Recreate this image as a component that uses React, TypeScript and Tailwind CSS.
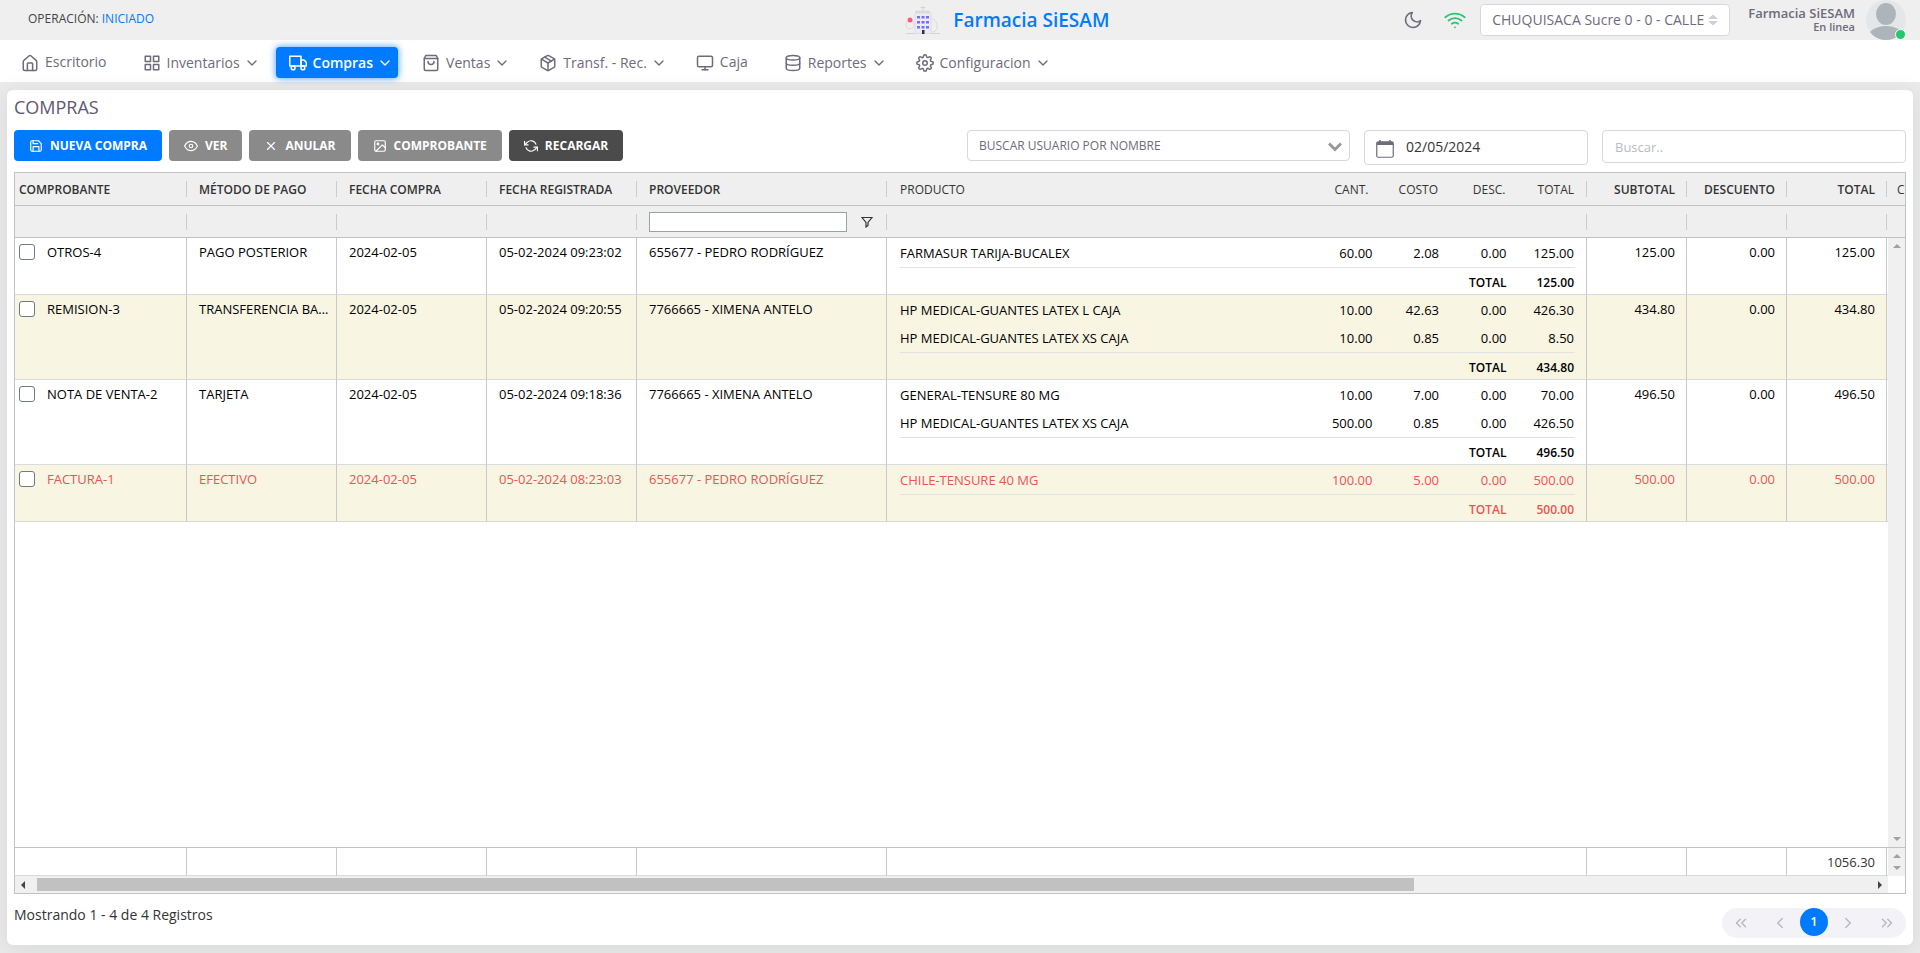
import type { ReactNode } from "react";
import {
  FiChevronDown,
  FiChevronLeft,
  FiChevronRight,
  FiChevronsLeft,
  FiChevronsRight,
  FiDatabase,
  FiEye,
  FiGrid,
  FiImage,
  FiMonitor,
  FiMoon,
  FiPackage,
  FiRefreshCcw,
  FiSave,
  FiSettings,
  FiTruck,
  FiWifi,
  FiX,
} from "react-icons/fi";

type Item = { name: string; qty: string; cost: string; disc: string; total: string };
type Purchase = {
  id: string;
  method: string;
  date: string;
  registered: string;
  supplier: string;
  items: Item[];
  total: string;
  cancelled?: boolean;
};

const purchases: Purchase[] = [
  {
    id: "OTROS-4",
    method: "PAGO POSTERIOR",
    date: "2024-02-05",
    registered: "05-02-2024 09:23:02",
    supplier: "655677 - PEDRO RODRÍGUEZ",
    items: [{ name: "FARMASUR TARIJA-BUCALEX", qty: "60.00", cost: "2.08", disc: "0.00", total: "125.00" }],
    total: "125.00",
  },
  {
    id: "REMISION-3",
    method: "TRANSFERENCIA BANCARIA",
    date: "2024-02-05",
    registered: "05-02-2024 09:20:55",
    supplier: "7766665 - XIMENA ANTELO",
    items: [
      { name: "HP MEDICAL-GUANTES LATEX L CAJA", qty: "10.00", cost: "42.63", disc: "0.00", total: "426.30" },
      { name: "HP MEDICAL-GUANTES LATEX XS CAJA", qty: "10.00", cost: "0.85", disc: "0.00", total: "8.50" },
    ],
    total: "434.80",
  },
  {
    id: "NOTA DE VENTA-2",
    method: "TARJETA",
    date: "2024-02-05",
    registered: "05-02-2024 09:18:36",
    supplier: "7766665 - XIMENA ANTELO",
    items: [
      { name: "GENERAL-TENSURE 80 MG", qty: "10.00", cost: "7.00", disc: "0.00", total: "70.00" },
      { name: "HP MEDICAL-GUANTES LATEX XS CAJA", qty: "500.00", cost: "0.85", disc: "0.00", total: "426.50" },
    ],
    total: "496.50",
  },
  {
    id: "FACTURA-1",
    method: "EFECTIVO",
    date: "2024-02-05",
    registered: "05-02-2024 08:23:03",
    supplier: "655677 - PEDRO RODRÍGUEZ",
    items: [{ name: "CHILE-TENSURE 40 MG", qty: "100.00", cost: "5.00", disc: "0.00", total: "500.00" }],
    total: "500.00",
    cancelled: true,
  },
];

function HomeIcon() {
  return (
    <svg viewBox="0 0 24 24" className="size-[18px]" fill="none" stroke="currentColor" strokeWidth="2" strokeLinecap="round" strokeLinejoin="round">
      <path d="M3 10.500c0-1 .4-1.700 1.200-2.300L10.500 2.700a2.300 2.300 0 0 1 3 0l6.300 5.500c.8.600 1.200 1.300 1.200 2.300V20a2 2 0 0 1-2 2H5a2 2 0 0 1-2-2z" />
      <path d="M8.500 22v-9a1 1 0 0 1 1-1h5a1 1 0 0 1 1 1v9" />
    </svg>
  );
}

function BagIcon() {
  return (
    <svg viewBox="0 0 24 24" className="size-[18px]" fill="none" stroke="currentColor" strokeWidth="2" strokeLinecap="round" strokeLinejoin="round">
      <path d="M5 2h14l2 4v14a2 2 0 0 1-2 2H5a2 2 0 0 1-2-2V6z" />
      <path d="M3 6h18" />
      <path d="M16 10a4 4 0 0 1-8 0" />
    </svg>
  );
}

function Logo() {
  return (
    <svg viewBox="0 0 36 30" className="h-[30px] w-9" aria-hidden="true">
      <path d="M1 28.500h34" stroke="#d4d4d8" strokeWidth="1" />
      <path d="M18 1v5M15.500 2.500h5" stroke="#d4d4d8" strokeWidth="1" />
      <path d="M11 6.500h14M10 8h16" stroke="#cfcfd4" strokeWidth="1.500" strokeDasharray="2 .7" />
      <rect x="10" y="8" width="16" height="20.500" rx="1.500" fill="#ebebf1" stroke="#dedee3" />
      <circle cx="5" cy="20" r="4" fill="none" stroke="#dcdce0" />
      <path d="M26 14c4 0 6 3 6 7s-2 6-5 6" fill="none" stroke="#dcdce0" />
      <circle cx="5" cy="15" r="2.500" fill="#ff5b75" />
      <g fill="#766eff">
        <rect x="12" y="11" width="3" height="2.500" />
        <rect x="16.500" y="11" width="3" height="2.500" />
        <rect x="21" y="11" width="3" height="2.500" />
        <rect x="12" y="16" width="3" height="2.500" />
        <rect x="16.500" y="16" width="3" height="2.500" />
        <rect x="21" y="16" width="3" height="2.500" />
        <rect x="12" y="21" width="3" height="2.500" />
        <rect x="16.500" y="21" width="3" height="2.500" />
        <rect x="21" y="21" width="3" height="2.500" />
      </g>
      <rect x="17" y="25" width="2.500" height="4" fill="#2f2e41" />
    </svg>
  );
}

function NavItem({ icon, label, menu = false, active = false }: { icon: ReactNode; label: string; menu?: boolean; active?: boolean }) {
  const look = active
    ? "bg-[#007bff] font-semibold text-white shadow-[0_0_6px_1px_rgba(0,123,255,0.6)]"
    : "font-medium text-[#6e6b7b]";
  return (
    <a href="#" className={`flex h-[31px] items-center rounded pl-[13px] text-sm ${menu ? "pr-[5px]" : "pr-3"} ${look}`}>
      {icon}
      <span className={`ml-1.5 ${menu ? "pt-px" : "pb-0.5"}`}>{label}</span>
      {menu && <FiChevronDown className="ml-1 size-4" />}
    </a>
  );
}

function ToolButton({ icon, label, color }: { icon: ReactNode; label: string; color: string }) {
  return (
    <button type="button" className={`flex h-[31px] items-center gap-[7px] rounded px-[15px] text-xs font-bold text-white ${color}`}>
      {icon}
      {label}
    </button>
  );
}

function Columns({ last }: { last: string }) {
  return (
    <colgroup>
      <col className="w-[172px]" />
      <col className="w-[150px]" />
      <col className="w-[150px]" />
      <col className="w-[150px]" />
      <col className="w-[250px]" />
      <col />
      <col className="w-[100px]" />
      <col className="w-[100px]" />
      <col className="w-[100px]" />
      <col className={last} />
    </colgroup>
  );
}

function HeadCell({ children, right = false, first = false }: { children?: ReactNode; right?: boolean; first?: boolean }) {
  return (
    <th className="border-b border-[#bdc3c7] p-0 font-semibold">
      <div className={`flex h-4 items-center border-r border-[#c9cccd] ${first ? "pl-1" : "pl-3"} ${right ? "justify-end pr-[11px]" : ""}`}>
        {typeof children === "string" ? <span className="pt-0.5">{children}</span> : children}
      </div>
    </th>
  );
}

function BodyCell({ children, right = false }: { children?: ReactNode; right?: boolean }) {
  return (
    <td
      className={`truncate border-r border-b border-r-[#c5c9cc] border-b-[#d9dcde] p-0 pt-[5px] pl-3 align-top leading-[18px] ${right ? "pr-[11px] text-right" : "pr-1"}`}
    >
      {children}
    </td>
  );
}

function ItemsTable({ purchase }: { purchase: Purchase }) {
  return (
    <table className="w-full table-fixed border-separate border-spacing-0">
      <colgroup>
        <col />
        <col className="w-[10%]" />
        <col className="w-[10%]" />
        <col className="w-[10%]" />
        <col className="w-[10%]" />
      </colgroup>
      <tbody>
        {purchase.items.map((item) => (
          <tr key={item.name} className="h-7 text-right">
            <td className="p-0 text-left">{item.name}</td>
            <td className="p-0">{item.qty}</td>
            <td className="p-0 pr-px">{item.cost}</td>
            <td className="p-0 pr-px">{item.disc}</td>
            <td className="p-0 pr-px">{item.total}</td>
          </tr>
        ))}
        <tr className="h-[27px] text-right text-xs font-semibold">
          <td colSpan={4} className="border-t border-[#e0e2e6] p-0 pt-1 pr-px">
            TOTAL
          </td>
          <td className="border-t border-[#e0e2e6] p-0 pt-1 pr-px">{purchase.total}</td>
        </tr>
      </tbody>
    </table>
  );
}

function Arrow({ dir, dark = false }: { dir: "up" | "down" | "left" | "right"; dark?: boolean }) {
  const d = {
    up: "M0 6 4 2l4 4z",
    down: "M0 2l4 4 4-4z",
    left: "M6 0 2 4l4 4z",
    right: "M2 0l4 4-4 4z",
  }[dir];
  return (
    <svg viewBox="0 0 8 8" className={`size-2 ${dark ? "text-[#444]" : "text-[#a0a0a0]"}`} aria-hidden="true">
      <path d={d} fill="currentColor" />
    </svg>
  );
}

function VerticalBar() {
  return (
    <div className="flex w-[17px] shrink-0 flex-col items-center justify-between bg-[#f0f0f0] py-1">
      <Arrow dir="up" />
      <Arrow dir="down" />
    </div>
  );
}

function TopBar() {
  return (
    <header className="flex h-10 items-center bg-[#efefef] pr-3.5">
      <p className="w-[47.5%] pb-0.5 pl-7 text-xs font-medium text-[#444]">
        OPERACIÓN: <span className="text-[#007bff]">INICIADO</span>
      </p>
      <div className="flex items-center gap-3">
        <Logo />
        <h1 className="pt-0.5 text-[19px] font-semibold text-[#007bff]">Farmacia SiESAM</h1>
      </div>
      <div className="ml-auto flex items-center text-[#6e6b7b]">
        <button type="button" aria-label="Modo oscuro">
          <FiMoon className="size-5" />
        </button>
        <FiWifi className="ml-[21px] size-[22px] text-[#28c76f]" />
        <div className="relative ml-3.5">
          <select
            aria-label="Sucursal"
            className="h-8 w-[250px] appearance-none rounded border border-[#d8d6de] bg-white pl-[11px] text-sm text-[#6e6b7b]"
          >
            <option>CHUQUISACA Sucre 0 - 0 - CALLE</option>
          </select>
          <svg viewBox="0 0 10 12" className="pointer-events-none absolute top-2.5 right-3 h-3 w-2.5 text-[#d0ced8]" aria-hidden="true">
            <path d="M0 5l5-4.500L10 5zM0 7l5 4.500L10 7z" fill="currentColor" />
          </svg>
        </div>
        <div className="ml-[18px] pb-px text-right">
          <p className="text-[13px] leading-[15px] font-semibold">Farmacia SiESAM</p>
          <p className="text-[11px] leading-3 font-semibold">En linea</p>
        </div>
        <div className="relative ml-[11px]">
          <svg viewBox="0 0 40 40" className="size-10" aria-hidden="true">
            <defs>
              <clipPath id="avatar">
                <circle cx="20" cy="20" r="20" />
              </clipPath>
            </defs>
            <g clipPath="url(#avatar)">
              <rect width="40" height="40" fill="#e4e7ea" />
              <ellipse cx="20" cy="14" rx="10" ry="11" fill="#adb4ba" />
              <ellipse cx="20" cy="39" rx="19" ry="13" fill="#adb4ba" />
            </g>
          </svg>
          <span className="absolute right-0 bottom-0 size-[11px] rounded-full border border-white bg-[#28c76f]" />
        </div>
      </div>
    </header>
  );
}

export default function App() {
  return (
    <div className="flex min-h-screen flex-col bg-[#ebebeb] font-['Open_Sans','Noto_Sans',sans-serif] text-xs text-[#333]">
      <TopBar />
      <nav className="flex h-[42px] items-center gap-[11px] bg-white pt-[3px] pl-2">
        <NavItem icon={<HomeIcon />} label="Escritorio" />
        <NavItem icon={<FiGrid className="size-[18px]" />} label="Inventarios" menu />
        <NavItem icon={<FiTruck className="size-[18px]" />} label="Compras" menu active />
        <NavItem icon={<BagIcon />} label="Ventas" menu />
        <NavItem icon={<FiPackage className="size-[18px]" />} label="Transf. - Rec." menu />
        <NavItem icon={<FiMonitor className="size-[18px]" />} label="Caja" />
        <NavItem icon={<FiDatabase className="size-[18px]" />} label="Reportes" menu />
        <NavItem icon={<FiSettings className="size-[18px]" />} label="Configuracion" menu />
      </nav>

      <main className="mx-[7px] mt-2 mb-2 flex flex-1 flex-col rounded-md bg-white px-[7px] pb-[7px] shadow-[0_4px_24px_0_rgba(34,41,47,0.1)]">
        <h2 className="pt-[5px] text-lg leading-6 font-medium text-[#5e5873]">COMPRAS</h2>

        <div className="mt-[11px] flex h-[42px] items-start gap-[7px]">
          <ToolButton icon={<FiSave className="size-3.5" />} label="NUEVA COMPRA" color="bg-[#007bff]" />
          <ToolButton icon={<FiEye className="size-3.5" />} label="VER" color="bg-[#8a8a8a]" />
          <ToolButton icon={<FiX className="size-3.5" />} label="ANULAR" color="bg-[#8a8a8a]" />
          <ToolButton icon={<FiImage className="size-3.5" />} label="COMPROBANTE" color="bg-[#8a8a8a]" />
          <ToolButton icon={<FiRefreshCcw className="size-3.5" />} label="RECARGAR" color="bg-[#4b4b4b]" />
          <div className="ml-auto flex items-start gap-3.5 text-[#6e6b7b]">
            <div className="relative">
              <select
                aria-label="Buscar usuario por nombre"
                className="h-[31px] w-[383px] appearance-none rounded border border-[#d8d6de] bg-white pl-[11px] text-xs"
              >
                <option>BUSCAR USUARIO POR NOMBRE</option>
              </select>
              <svg viewBox="0 0 14 10" className="pointer-events-none absolute top-3 right-2 h-2.5 w-3.5" fill="none" stroke="#999" strokeWidth="3" aria-hidden="true">
                <path d="M1 1.500l6 6 6-6" />
              </svg>
            </div>
            <label className="flex h-[35px] w-56 items-center rounded border border-[#d8d6de] pb-0.5 pl-[11px]">
              <svg viewBox="0 0 18 18" className="mt-1 size-[18px]" fill="none" stroke="#6e6b7b" aria-hidden="true">
                <rect x=".75" y="1.750" width="16.500" height="15.500" rx="1.500" strokeWidth="1.200" />
                <path d="M1 3.500h16" strokeWidth="3" />
                <path d="M4 0v3M14 0v3" strokeWidth="1.500" />
              </svg>
              <input type="text" aria-label="Fecha" defaultValue="02/05/2024" className="ml-3 w-40 text-sm text-[#333] outline-none" />
            </label>
            <input
              type="search"
              aria-label="Buscar"
              placeholder="Buscar.."
              className="h-[33px] w-[304px] rounded border border-[#d8d6de] px-3 text-[13px] outline-none placeholder:text-[#b9b9c3]"
            />
          </div>
        </div>

        <section className="flex flex-1 flex-col border border-[#bdc3c7]">
          <table className="w-full table-fixed border-separate border-spacing-0 bg-[#efefef] text-left text-[#333]">
            <Columns last="w-[18px]" />
            <thead>
              <tr className="h-[33px]">
                <HeadCell first>COMPROBANTE</HeadCell>
                <HeadCell>MÉTODO DE PAGO</HeadCell>
                <HeadCell>FECHA COMPRA</HeadCell>
                <HeadCell>FECHA REGISTRADA</HeadCell>
                <HeadCell>PROVEEDOR</HeadCell>
                <th className="border-b border-[#bdc3c7] p-0 font-normal">
                  <div className="flex h-4 items-center border-r border-[#c9cccd] pr-[11px] pl-[13px] text-right">
                    <span className="flex-1 pt-0.5 text-left">PRODUCTO</span>
                    <span className="w-[10%] pt-0.5 pr-1">CANT.</span>
                    <span className="w-[10%] pt-0.5 pr-0.5">COSTO</span>
                    <span className="w-[10%] pt-0.5 pr-0.5">DESC.</span>
                    <span className="w-[10%] pt-0.5 pr-px">TOTAL</span>
                  </div>
                </th>
                <HeadCell right>SUBTOTAL</HeadCell>
                <HeadCell right>DESCUENTO</HeadCell>
                <HeadCell right>TOTAL</HeadCell>
                <th className="overflow-hidden border-b border-[#bdc3c7] p-0 pt-0.5 pl-2.5 font-normal">C</th>
              </tr>
              <tr className="h-8">
                <HeadCell />
                <HeadCell />
                <HeadCell />
                <HeadCell />
                <HeadCell>
                  <input
                    type="text"
                    aria-label="Filtrar proveedor"
                    className="h-5 w-[198px] border border-[#95a5a6] bg-white px-1 outline-none"
                  />
                  <button type="button" aria-label="Abrir filtro" className="ml-3.5">
                    <svg viewBox="0 0 12 12" className="size-3" fill="none" stroke="#333" strokeWidth="1.200" aria-hidden="true">
                      <path d="M1 1.500h10L7 6.500v3L5 11V6.500z" />
                    </svg>
                  </button>
                </HeadCell>
                <HeadCell />
                <HeadCell />
                <HeadCell />
                <HeadCell />
                <th className="border-b border-[#bdc3c7] p-0" />
              </tr>
            </thead>
          </table>

          <div className="flex flex-1">
            <div className="min-w-0 flex-1">
              <table className="w-full table-fixed border-separate border-spacing-0 text-[13px] leading-[18px]">
                <Columns last="w-px" />
                <tbody>
                  {purchases.map((p, i) => (
                    <tr
                      key={p.id}
                      className={`${i % 2 ? "bg-[#f8f5e3]" : "bg-white"} ${p.cancelled ? "text-[#ea5455]" : "text-black"}`}
                    >
                      <td className="border-r border-b border-r-[#c5c9cc] border-b-[#d9dcde] p-0 pt-[5px] pl-1 align-top">
                        <label className="flex items-center gap-3">
                          <input type="checkbox" className="size-4 appearance-none rounded-[3px] border border-[#6f7b80] bg-white" />
                          {p.id}
                        </label>
                      </td>
                      <BodyCell>{p.method}</BodyCell>
                      <BodyCell>{p.date}</BodyCell>
                      <BodyCell>{p.registered}</BodyCell>
                      <BodyCell>{p.supplier}</BodyCell>
                      <td className="border-r border-b border-r-[#c5c9cc] border-b-[#d9dcde] p-0 pt-px pr-[11px] pl-[13px] align-top">
                        <ItemsTable purchase={p} />
                      </td>
                      <BodyCell right>{p.total}</BodyCell>
                      <BodyCell right>0.00</BodyCell>
                      <BodyCell right>{p.total}</BodyCell>
                      <td className="border-b border-[#d9dcde] p-0" />
                    </tr>
                  ))}
                </tbody>
              </table>
            </div>
            <VerticalBar />
          </div>

          <div className="flex border-t border-[#bdc3c7]">
            <div className="min-w-0 flex-1">
              <table className="w-full table-fixed border-separate border-spacing-0 text-[13px]">
                <Columns last="w-px" />
                <tbody>
                  <tr className="h-7">
                    {Array.from({ length: 8 }, (_, i) => (
                      <td key={i} className="border-r border-b border-r-[#c5c9cc] border-b-[#d9dcde] p-0" />
                    ))}
                    <td className="border-r border-b border-r-[#c5c9cc] border-b-[#d9dcde] p-0 pt-0.5 pr-[11px] text-right">1056.30</td>
                    <td className="border-b border-[#d9dcde] p-0" />
                  </tr>
                </tbody>
              </table>
            </div>
            <VerticalBar />
          </div>

          <div className="flex h-[17px] bg-[#f0f0f0]">
            <div className="flex flex-1 items-center pr-1 pl-1">
              <Arrow dir="left" dark />
              <div className="flex flex-1 px-2.5">
                <div className="h-[13px] flex-[61] bg-[#c1c1c1]" />
                <div className="flex-[20]" />
              </div>
              <Arrow dir="right" dark />
            </div>
            <div className="w-[17px] bg-white" />
          </div>
        </section>

        <footer className="flex h-11 items-start justify-between">
          <p className="pt-[11px] text-sm leading-5">Mostrando 1 - 4 de 4 Registros</p>
          <div className="mt-3.5 flex h-[30px] items-center rounded-full bg-[#f3f2f7] px-2.5 text-[#b9b9c3]">
            <button type="button" aria-label="Primera" className="flex w-7">
              <FiChevronsLeft className="size-[18px]" />
            </button>
            <button type="button" aria-label="Anterior" className="flex w-10 justify-center">
              <FiChevronLeft className="size-[18px]" />
            </button>
            <button type="button" className="mb-0.5 size-7 rounded-full bg-[#007bff] text-xs font-semibold text-white">
              1
            </button>
            <button type="button" aria-label="Siguiente" className="flex w-10 justify-center">
              <FiChevronRight className="size-[18px]" />
            </button>
            <button type="button" aria-label="Última" className="flex w-7 justify-end">
              <FiChevronsRight className="size-[18px]" />
            </button>
          </div>
        </footer>
      </main>
    </div>
  );
}
